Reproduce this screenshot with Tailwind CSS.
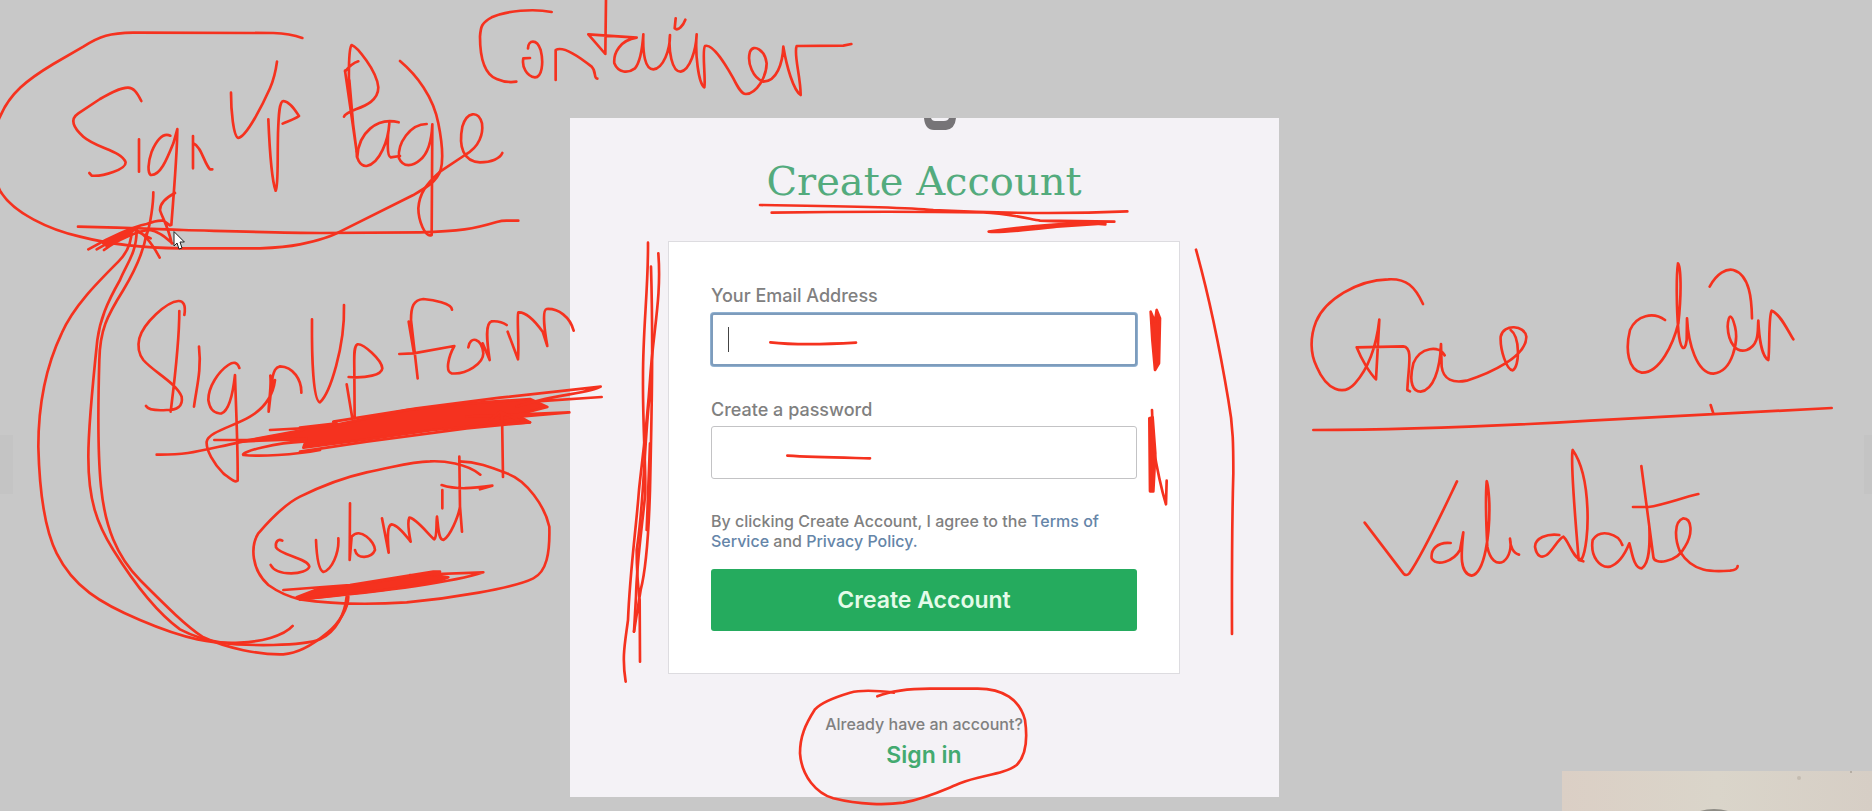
<!DOCTYPE html>
<html lang="en">
<head>
<meta charset="utf-8">
<meta name="viewport" content="width=device-width, initial-scale=1">
<title>Create Account</title>
<script src="https://cdn.jsdelivr.net/npm/@tailwindcss/browser@4"></script>
</head>
<body class="relative min-h-screen overflow-x-hidden bg-[#c8c8c8] font-['Inter',sans-serif] font-medium text-[#808080]">
<main class="flex justify-center px-4 pt-[118px] pb-3 lg:pr-10">
  <section class="relative w-full max-w-[709px] bg-[#f4f2f6] px-4 pt-10 pb-7">
    <svg class="absolute top-0 left-1/2 h-3 w-8" viewBox="0 0 32 12" aria-hidden="true"><path d="M0 0H7Q8 3 11 3H20Q24 3 25 0H32Q31 11 22 12H10Q1 12 0 0Z" fill="#767477"/></svg>
    <h1 class="text-center font-['DejaVu_Serif',serif] text-[40px] leading-[46px] font-light text-[#53ab7d]">Create Account</h1>
    <form class="mx-auto mt-[37px] w-full max-w-[512px] border border-[#dddce0] bg-white px-[42px] py-[42px]">
      <label for="email" class="block text-lg leading-6">Your Email Address</label>
      <div class="relative mt-[5px]">
        <input id="email" type="email" class="block h-[53px] w-full rounded-[3px] border-2 border-[#7d9cbc] bg-white px-4 text-lg ring-1 ring-[#8fb0d0] outline-none">
        <span class="absolute top-[14px] left-[17px] h-[25px] w-px bg-[#444]"></span>
      </div>
      <label for="password" class="mt-8 block text-lg leading-6">Create a password</label>
      <input id="password" type="password" class="mt-1 block h-[53px] w-full rounded-[3px] border border-[#c3c3c5] bg-white px-4 text-lg outline-none">
      <p class="mt-8 text-base leading-5">By clicking Create Account, I agree to the <a href="#terms" class="text-[#6585a8]">Terms of Service</a> and <a href="#privacy" class="text-[#6585a8]">Privacy Policy.</a></p>
      <button type="button" class="mt-[18px] block h-[62px] w-full rounded-[3px] bg-[#25ab5e] text-[23px] font-semibold text-[#e4fbe9]">Create Account</button>
    </form>
    <p class="mt-10 text-center text-base leading-5">Already have an account?</p>
    <p class="mt-[7px] text-center text-[23px] leading-7 font-semibold"><a href="#signin" class="text-[#43aa70]">Sign in</a></p>
  </section>
</main>

<div class="absolute right-0 bottom-0 h-10 w-[310px] overflow-hidden bg-linear-to-r from-[#dbcfc5] via-[#dad5ca] to-[#d6cec5]">
  <svg class="h-full w-full" viewBox="0 0 310 40" aria-hidden="true"><path d="M138 40Q152 36 166 40Z" fill="#8f8d86"/><circle cx="237" cy="7" r="2" fill="#c4bcb0"/><circle cx="289" cy="1" r="1" fill="#aaa399"/></svg>
</div>

<!-- Freehand pen layer; each group has its own drawing origin. -->
<div class="pointer-events-none absolute inset-0 overflow-hidden">
<svg class="absolute top-0 left-1/2 h-[811px] w-[1872px] max-w-none -translate-x-1/2" viewBox="0 0 1872 811" fill="none" stroke="#f5321f" stroke-width="8" stroke-linecap="round" stroke-linejoin="round" aria-hidden="true">
  <g fill="#c4c4c4" stroke="none"><rect x="0" y="435" width="13" height="59"/><rect x="1864" y="435" width="8" height="59"/></g>

  <!-- sign up, loop and underline -->
  <g transform="scale(.33333)">
    <path d="M907 114Q870 101 820 99L400 98C330 99 300 108 250 140L160 192C80 240 30 280 0 350C-24 400 -24 520 0 572C40 640 150 690 240 710C330 733 430 744 540 745H780C830 743 865 740 900 733C940 725 985 715 1020 695L1240 585C1280 562 1310 545 1322 510C1330 480 1327 430 1315 370C1300 290 1250 225 1200 183"/>
    <path d="M234 680C400 683 480 688 550 690C700 694 850 699 960 699L1260 697C1380 694 1420 687 1490 666Q1505 662 1520 662H1555"/>
    <path d="M424 303C410 275 400 263 384 263C360 263 330 280 300 297L235 340C208 358 220 383 250 410C290 445 365 452 377 487C378 508 310 530 275 527L268 519M417 418V515"/>
    <path d="M511 407C490 398 470 420 455 455C443 490 443 518 452 525C480 528 500 480 520 430L532 387C532 450 520 600 514 675M579 408V505M580 430C605 440 612 490 630 508H637"/>
    <path d="M693 278C693 330 700 410 715 414C740 410 790 310 810 265Q825 230 831 185M805 358C808 430 815 540 827 572C835 560 832 500 834 400C836 340 838 305 850 303C870 305 885 330 897 348C885 358 860 365 848 371"/>
    <path d="M460 577C460 610 452 670 440 705M525 579C500 592 480 610 480 630C485 650 505 680 515 730M265 748C330 710 400 680 440 672Q470 660 490 662L510 676M290 748C340 720 390 695 402 688Q440 700 479 773M312 750C350 720 420 690 450 690C480 695 500 715 517 730M310 730L400 688L452 715M320 738L410 686"/>
  </g>

  <!-- page, cont- -->
  <g transform="translate(300 0) scale(.33333)">
    <path d="M132 350C140 325 235 325 235 262C230 210 170 140 155 135C145 145 145 250 150 300L170 455L135 212M135 215Q155 190 175 184M148 240L160 380"/>
    <path d="M170 455C168 470 178 500 200 498C240 490 265 420 268 370C262 410 260 470 272 472L300 468M296 367C230 350 175 400 172 470"/>
    <path d="M380 372C330 372 292 430 297 475C310 505 340 498 360 480C385 460 395 420 397 373L395 705C375 715 355 660 355 625C358 580 380 550 420 515L495 465C540 440 550 400 546 370C535 330 500 335 487 380C475 440 490 485 540 487C575 487 600 475 607 459"/>
    <path d="M755 36C700 25 620 32 575 52C545 68 542 80 540 110C540 190 560 225 590 237C615 248 635 247 649 245M684 145C685 120 710 115 722 150C732 190 725 232 705 232C680 230 665 200 670 175L690 174M767 240V150C790 135 850 180 875 200C890 215 880 235 892 236"/>
  </g>

  <!-- -tainer -->
  <g transform="translate(560 0) scale(.33333)">
    <path d="M138 -5L136 162L85 103L230 113C180 120 160 160 163 190C175 220 205 220 225 205C245 180 248 130 250 103C248 160 255 208 280 208C310 205 330 150 330 105C325 150 335 215 362 215C390 210 408 150 410 103C405 160 415 250 433 262C438 240 425 150 435 138C460 130 500 200 520 235C535 265 545 283 558 282C590 280 620 230 620 190C615 150 580 130 570 155C560 190 580 235 610 245C650 245 668 190 670 140C680 200 700 270 722 285C722 230 700 160 710 138L850 137L874 132M347 55L344 85C355 95 370 75 376 59"/>
  </g>

  <!-- long return arrows, sign -->
  <g transform="translate(0 260) scale(.33333)">
    <path d="M395 -90C395 -40 370 -10 355 5C290 70 220 140 185 220C130 335 115 450 115 560C118 680 130 800 170 880C220 980 300 1030 420 1080C560 1140 640 1152 720 1148C780 1145 850 1130 878 1098"/>
    <path d="M410 -90C410 -20 380 10 360 60C320 130 300 180 292 240C275 400 265 500 265 590C265 720 290 790 340 870C390 950 460 1050 540 1108C620 1150 700 1157 820 1155C870 1154 930 1150 960 1138C1010 1115 1035 1060 1040 1010"/>
    <path d="M440 -80C430 -20 400 40 370 90C320 170 300 210 298 300C292 500 295 600 303 680C315 800 350 890 420 960C500 1040 560 1100 610 1132C680 1165 780 1185 850 1183C900 1180 950 1145 980 1120C1020 1090 1045 1040 1045 1010"/>
    <path d="M553 165C558 135 550 122 535 123C500 125 430 190 418 235C412 260 415 280 430 300C460 335 530 370 545 410C550 440 530 450 500 450C470 452 445 450 438 438M538 153C538 250 525 350 512 455M597 260C605 330 590 380 582 440"/>
    <path d="M718 324C712 305 700 305 685 315C655 335 625 380 625 420C630 455 650 462 665 460C690 450 700 390 705 345C708 450 714 560 713 662C705 670 690 655 670 640C640 610 618 570 620 545C625 515 700 500 750 470C800 440 820 400 825 360M811 347C815 380 806 420 806 455L818 350C822 335 825 322 840 319C880 320 905 360 904 398"/>
    <path d="M470 584C560 585 590 575 690 553C800 530 900 515 970 510M643 540H960M960 570C880 585 780 590 730 585C720 575 830 548 910 545M810 510L960 502"/>
    <path d="M847 842C835 835 825 845 828 862C840 885 925 895 928 920C920 945 830 950 812 915"/>
  </g>

  <!-- up form, submit -->
  <g transform="translate(300 260) scale(.33333)">
    <path d="M36 178C35 300 40 425 60 427C90 400 135 260 132 135M146 351C200 355 245 345 247 325C245 300 190 250 172 253C160 260 163 290 163 340L164 475M140 373L157 475"/>
    <path d="M456 149C455 130 400 120 370 117C340 120 333 140 333 180L353 355M326 185L342 280M298 282L340 280L463 258C445 290 435 335 455 340C500 345 550 310 550 280C545 235 510 225 505 262M548 250L569 300C560 240 555 190 575 184C600 182 610 188 620 195M623 215L654 298C658 250 650 165 655 157C680 155 710 190 728 215L742 258C735 220 725 150 740 147C775 145 810 170 821 212"/>
    <path fill="#f5321f" d="M-180 545L0 512L20 503L100 496L320 450L500 430L690 417L742 441L650 465L690 487L600 492L400 510L200 538L10 563L20 535Z"/>
    <path d="M100 485L350 445L600 413L902 380C870 400 750 405 650 440M905 411L700 425M0 575L200 545L500 505L690 487M500 470L808 457L600 475M0 503L110 490"/>
    <path d="M570 480L600 455L655 480M606 460L609 651"/>
    <path d="M541 644C500 610 430 602 390 604C330 605 290 620 200 637C120 655 60 680 0 710C-50 735 -95 785 -125 820C-150 860 -145 930 -95 975C-60 1000 -35 1010 0 1018C80 1030 200 1035 320 1027C450 1015 640 985 700 955C740 935 750 880 748 800C735 740 680 660 620 640C570 620 530 605 478 604"/>
    <path d="M48 840C50 890 55 930 70 936C95 930 118 880 115 835M150 730L149 900L155 830C180 800 225 845 225 870C215 895 170 900 165 870M246 775L266 878C262 830 262 795 275 793C295 795 320 830 332 845C325 810 322 785 328 773C350 775 390 830 403 838C412 830 408 790 411 770C415 800 415 840 430 840C450 830 475 770 480 740M427 690V745M478 590L480 740L486 815M425 675C470 690 520 685 577 677L540 688"/>
    <path fill="#f5321f" d="M60 985L150 978L380 942L445 952L410 965L250 990L0 1018L-10 1012Z"/>
    <path d="M-50 990L150 975L400 935H420M330 945L550 937C480 960 300 990 0 1018"/>
  </g>

  <!-- strokes left of the card and inside the inputs -->
  <g transform="translate(620 230) scale(.33333)">
    <path d="M115 70C125 200 100 300 90 450C80 600 65 700 57 780C48 900 30 1020 24 1170C15 1240 5 1280 17 1355"/>
    <path d="M84 38C85 180 68 300 69 450C68 600 80 750 75 800C65 900 50 1000 48 1100L42 1205"/>
    <path d="M93 110C100 350 95 550 90 780C85 950 75 1030 62 1080L42 1205M95 440C70 640 75 800 50 960Q50 1040 59 1110L60 1295M90 640L80 900"/>
    <path d="M451 337C520 345 620 343 708 338M502 677C580 682 660 683 750 685"/>
  </g>

  <!-- title underline and right side strokes -->
  <g transform="translate(900 100) scale(.33333)">
    <path d="M-420 315C-200 318 0 320 100 330C300 340 500 342 682 334M-385 338C-200 335 0 334 250 337C320 340 380 355 420 362L643 365M616 373C540 366 400 375 266 395C300 400 380 390 470 380L616 370M420 362L600 369"/>
    <path fill="#f5321f" d="M752 635L757 720L765 810L777 790L780 655L770 630L765 665Z"/>
    <path d="M888 449C930 600 960 750 985 900C1000 980 1000 1040 1000 1120Q995 1300 996 1602"/>
  </g>
  <g transform="translate(940 380) scale(.33333)">
    <path fill="#f5321f" d="M628 115L638 112L646 220L640 334H630Z"/>
    <path d="M636 90L640 200C650 260 665 330 678 373L680 302"/>
  </g>

  <!-- loop round the sign-in link -->
  <g transform="translate(620 490) scale(.33333)">
    <path d="M822 608C760 600 720 600 690 608C650 620 605 635 585 658C555 705 540 740 540 790C545 860 590 910 640 925C720 945 800 945 850 938C920 925 970 900 1020 880C1080 855 1150 855 1190 825C1215 800 1225 760 1215 690C1200 630 1150 595 1070 596H930C870 596 820 600 772 619"/>
  </g>

  <!-- right-hand notes -->
  <g transform="translate(1290 250) scale(.33333)">
    <path d="M399 162C375 110 350 85 295 88C200 90 105 150 78 215C60 260 60 310 80 350C110 420 160 440 195 400C240 350 260 280 268 209L258 388C240 370 215 330 200 292L340 289C370 292 355 350 352 420L360 424"/>
    <path d="M464 316C450 285 390 290 370 340C355 400 370 425 392 425C430 420 450 360 453 282L455 350C460 390 490 400 530 392C600 370 710 320 709 260C705 225 640 220 632 260C630 300 650 360 668 361C690 350 690 260 662 240"/>
    <path d="M70 540C300 540 600 530 900 512L1625 474M1262 465L1270 490"/>
    <path d="M224 818L340 970Q348 980 358 970C400 910 460 780 501 694M482 879C440 875 422 900 425 925C440 950 490 935 510 900L520 847C515 900 505 970 545 977C585 970 600 850 598 760C596 710 590 690 590 694C585 760 590 850 592 890C600 930 620 945 640 935C660 920 665 890 660 866C660 890 670 910 687 914M808 855C770 850 735 865 735 890C740 920 755 925 770 915C790 900 805 865 820 860C835 870 850 930 875 928C900 880 905 680 848 600C840 640 860 850 866 930L880 934"/>
  </g>
  <g transform="translate(1570 250) scale(.33333)">
    <path d="M157 885C145 850 90 835 68 870C60 920 90 955 120 950C150 940 170 900 178 880C185 900 190 955 215 955C240 940 240 880 238 830M214 648L250 920C250 945 320 940 345 890C370 850 365 805 340 805C310 815 315 870 330 905C370 970 430 965 480 962Q503 960 503 948M189 771H235C280 765 330 745 385 732"/>
    <path d="M285 210C250 185 200 195 180 240C165 300 175 360 215 368C270 370 310 280 325 220C335 130 333 50 324 40C318 80 320 180 325 240C330 300 345 310 350 270L351 205C355 280 380 370 430 371C490 365 505 270 495 230C485 190 475 190 473 230C475 280 500 310 530 300C570 285 562 240 565 212C567 260 575 320 595 330C600 290 595 200 605 182C630 190 655 245 670 268M419 110C440 70 470 55 490 60C540 75 545 150 546 205"/>
  </g>

  <!-- mouse pointer -->
  <path transform="translate(173 231)" d="M1 1V15L4 12L6 18L9 17L7 11H11Z" fill="#fff" stroke="#222" stroke-width="1"/>
</svg>
</div>
</body>
</html>
